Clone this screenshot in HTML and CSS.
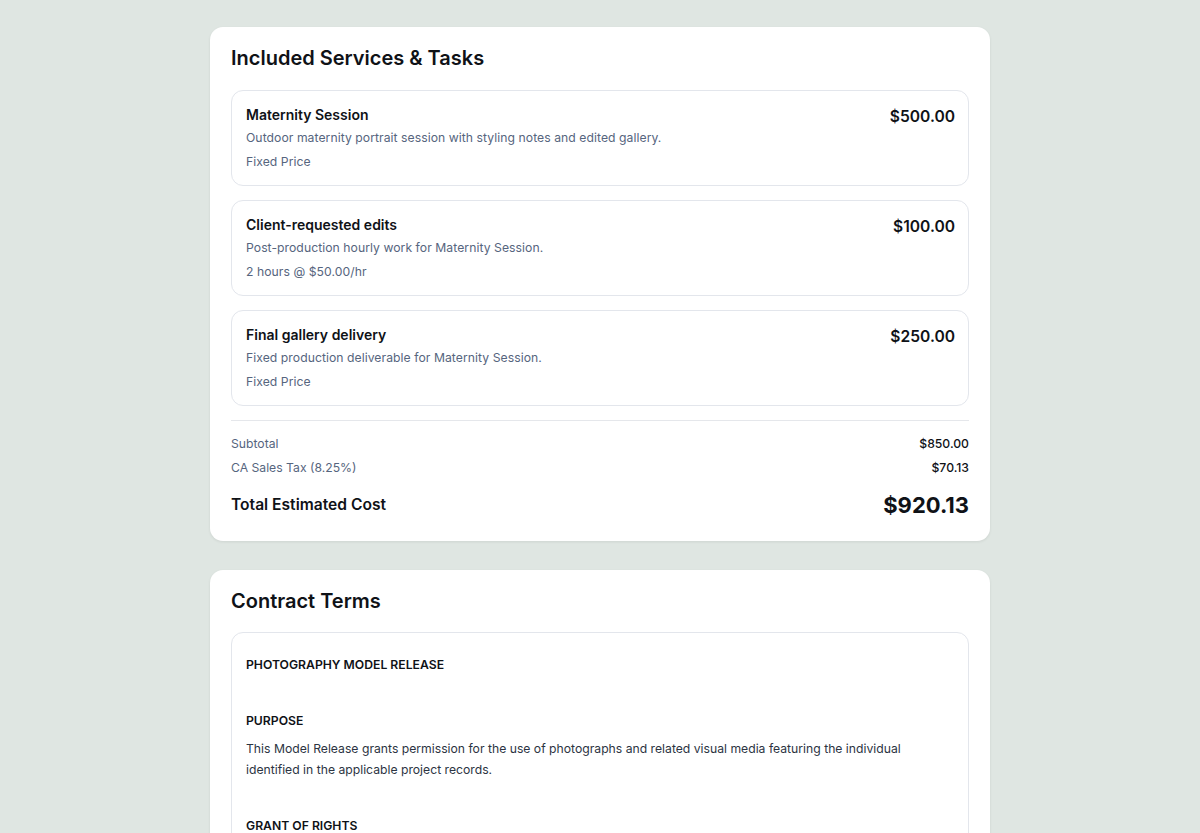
FILE: index.html
```html
<html>
	<head>
		<title>Estimate &amp; Contract</title>
		<link rel="stylesheet" href="styles.css">
	</head>
	<body>
		<div class="page">

			<section class="card">
				<h2 class="card-title">Included Services &amp; Tasks</h2>

				<div class="items">
					<div class="item">
						<div class="item-info">
							<div class="item-name">Maternity Session</div>
							<div class="item-desc">Outdoor maternity portrait session with styling notes and edited gallery.</div>
							<div class="item-meta">Fixed Price</div>
						</div>
						<div class="item-price">$500.00</div>
					</div>
					<div class="item">
						<div class="item-info">
							<div class="item-name">Client-requested edits</div>
							<div class="item-desc">Post-production hourly work for Maternity Session.</div>
							<div class="item-meta">2 hours @ $50.00/hr</div>
						</div>
						<div class="item-price">$100.00</div>
					</div>
					<div class="item">
						<div class="item-info">
							<div class="item-name">Final gallery delivery</div>
							<div class="item-desc">Fixed production deliverable for Maternity Session.</div>
							<div class="item-meta">Fixed Price</div>
						</div>
						<div class="item-price">$250.00</div>
					</div>
				</div> <!-- end .items -->

				<div class="totals">
					<div class="row">
						<span class="label">Subtotal</span>
						<span class="value">$850.00</span>
					</div>
					<div class="row">
						<span class="label">CA Sales Tax (8.25%)</span>
						<span class="value">$70.13</span>
					</div>
					<div class="row grand">
						<span class="label">Total Estimated Cost</span>
						<span class="value">$920.13</span>
					</div>
				</div> <!-- end .totals -->
			</section>

			<section class="card terms-card">
				<h2 class="card-title">Contract Terms</h2>

				<div class="terms">
					<h4>PHOTOGRAPHY MODEL RELEASE</h4>

					<h4>PURPOSE</h4>
					<p>This Model Release grants permission for the use of photographs and related visual media featuring the individual identified in the applicable project records.</p>

					<h4>GRANT OF RIGHTS</h4>
					<p>The individual grants the photographer the right to use, reproduce and publish images for portfolio, promotional and editorial purposes.</p>
				</div>
			</section>

		</div> <!-- end .page -->
	</body>
</html>
```

FILE: styles.css
```css
html, body {
	margin: 0;
	padding: 0;
}

body {
	background: #dfe6e2;
	font-family: Inter, "Noto Sans", sans-serif;
	color: #0f1217;
}

.page {
	width: 780px;
	margin: 0 auto;
	padding: 27px 0 40px;
	display: flex;
	flex-direction: column;
	gap: 29px;
}

.card {
	background: #fff;
	border-radius: 13px;
	padding: 19px 21px 21px;
	box-shadow: 0 1px 3px rgba(0,0,0,0.08);
}

.card-title {
	margin: 0 0 20px;
	font-size: 20px;
	line-height: 24px;
	font-weight: 600;
}

.terms-card .card-title {
	margin-bottom: 19px;
}

.items {
	display: flex;
	flex-direction: column;
	gap: 14px;
}

.item {
	display: flex;
	justify-content: space-between;
	align-items: flex-start;
	border: 1px solid #e3e6ec;
	border-radius: 12px;
	padding: 14px 13px 13px 14px;
}

.item-name {
	font-size: 14px;
	line-height: 20px;
	font-weight: 600;
}

.item-desc,
.item-meta {
	font-size: 12.2px;
	line-height: 20px;
	color: #56657e;
	letter-spacing: 0.05px;
}

.item-desc {
	margin-top: 3px;
}

.item-meta {
	margin-top: 4px;
}

.item-price {
	font-size: 15.6px;
	line-height: 24px;
	font-weight: 600;
}

.totals {
	margin-top: 14px;
	padding-top: 13px;
	border-top: 1px solid #e5e7eb;
}

.row {
	display: flex;
	justify-content: space-between;
	align-items: center;
	font-size: 12.2px;
	line-height: 20px;
	margin-bottom: 4px;
}

.row .label {
	color: #56657e;
}

.row .value {
	font-weight: 500;
}

.row.grand {
	margin: 12px 0 0;
	line-height: 30px;
}

.row.grand .label {
	color: #0f1217;
	font-size: 15.6px;
	font-weight: 600;
}

.row.grand .value {
	font-size: 22px;
	font-weight: 700;
}

.terms {
	border: 1px solid #e3e6ec;
	border-radius: 12px;
	padding: 22px 14px 20px;
}

.terms h4 {
	margin: 36px 0 7px;
	font-size: 12.2px;
	line-height: 20px;
	font-weight: 600;
}

.terms h4:first-child {
	margin-top: 0;
}

.terms p {
	margin: 0;
	font-size: 12.2px;
	line-height: 21px;
	color: #2c3442;
}
```
